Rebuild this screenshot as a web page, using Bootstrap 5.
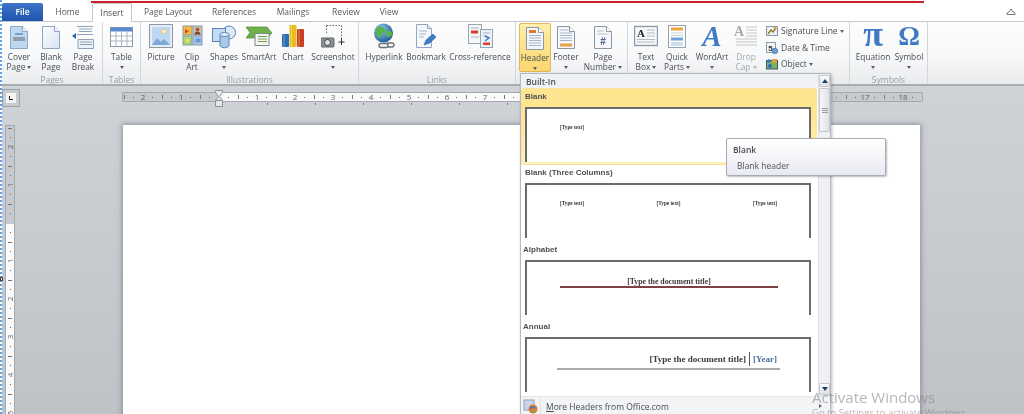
<!DOCTYPE html>
<html lang="en">
<head>
<meta charset="utf-8">
<title>Word Insert ribbon</title>
<link href="https://cdn.jsdelivr.net/npm/bootstrap@5.3.0/dist/css/bootstrap.min.css" rel="stylesheet">
<style>
html,body{margin:0;height:100%;overflow:hidden;background:#fff}
body{font-family:"Open Sans","Noto Sans",sans-serif;font-size:8.5px;color:#4a4d52;line-height:10px}
.app{width:1024px;height:414px;position:relative;overflow:hidden;filter:blur(.35px)}
.dotline{position:absolute;left:0;top:0;bottom:0;width:2px;z-index:5;background:repeating-linear-gradient(#5ba3e6 0 2px,#fff 2px 4px)}
.tabbar{height:22px;position:relative;background:#fff;border-bottom:1px solid #c4c7cc;padding-left:2px}
.redline{position:absolute;left:91px;width:833px;top:1px;height:2px;background:#c8232c}
.wfile{width:41px;height:18px;margin-top:3px;background:linear-gradient(#3d74c6,#1d55ae);color:#fff;border-radius:2px 2px 0 0;text-align:center;line-height:18px;font-weight:600}
.wtab{height:18px;margin-top:3px;line-height:18px;text-align:center;color:#55585d}
.wtab.on{height:19px;background:#fff;border:1px solid #c4c7cc;border-bottom:0;border-radius:2px 2px 0 0;color:#4a4d52;line-height:17px;position:relative;top:0}
.t1{width:49px}.t2{width:40px}.t3{width:72px}.t4{width:60px}.t5{width:58px}.t6{width:48px}.t7{width:38px}
.collapse-ico{position:absolute;right:8px;top:8px}
.ribbon{height:64px;padding-left:2px;background:linear-gradient(#fdfdfd,#f7f8f9 55%,#e9ebed);border-bottom:2px solid #a9adb2}
.rgrp{height:62px;border-right:1px solid #d4d7da;position:relative}
.gl{position:absolute;left:0;right:0;bottom:-2px;height:13px;line-height:13px;text-align:center;color:#989ca3}
.g1{width:101px;padding-left:1px}.g2{width:38px}.g3{width:218px;padding-left:4px}.g4{width:157px;padding-left:4px}.g5{width:112px;padding-left:3px}.g6{width:222px;padding-left:2px}.g7{width:78px;padding-left:5px}
.rb{display:flex;flex-direction:column;align-items:center;height:49px;padding-top:1px;flex:none;text-align:center;white-space:nowrap;font-size:8.3px}
.rb svg{display:block;height:27px;flex:none;margin-bottom:2px}
.rb.hot{background:linear-gradient(#fdeea8,#fbd76f);border:1px solid #e3b75a;border-radius:2px;margin-top:1px;padding-top:0}
.rb.off{color:#a6a9ad}
.bigsym{display:block;height:27px;margin-bottom:2px;line-height:27px;color:#3f7bc4;flex:none}
.pi{font-family:"Liberation Serif",serif;font-weight:700;font-size:36px;line-height:22px}
.om{font-family:"Liberation Serif",serif;font-weight:700;font-size:27px}
.wa{font-family:"Liberation Serif",serif;font-weight:700;font-style:italic;font-size:29px}
.w28{width:28px}.w30{width:30px}.w32{width:32px}.w34{width:34px}.w36{width:36px}.w37{width:37px}.w40{width:40px}.w42{width:42px}.w44{width:44px}.w48{width:48px}.w66{width:66px}
.car{display:inline-block;width:0;height:0;border:2.5px solid transparent;border-top:3px solid #5c5f64;border-bottom:0;vertical-align:1px}
.rb.off .car{border-top-color:#b5b8bc}
.scol{width:82px;margin-left:6px;padding-top:1px}
.si{height:16.5px;display:flex;align-items:center;gap:3px;white-space:nowrap}
.si svg{width:12px;height:12px;flex:none}
.docarea{position:relative;height:328px;background:linear-gradient(#cfd2d6,#bfc2c6)}
.corner{position:absolute;left:2px;top:3px;width:18px;height:18px;border:1px solid #9da1a6;padding:3px;background:#c7cacf}
.corner i{display:block;height:10px;background:#f4f5f6;position:relative}
.corner i::after{content:"";position:absolute;left:3px;top:3px;width:4px;height:4px;border-left:1.5px solid #222;border-bottom:1.5px solid #222}
.hruler{position:absolute;left:122px;top:6px;width:801px;height:10px;border:1px solid #a5a9ae;border-radius:1px;display:flex;padding-left:1px;background:linear-gradient(to right,#c6c9ce 96px,#fafafa 96px,#fafafa 700px,#c6c9ce 700px)}
.rc{width:38px;height:8px;flex:none;text-align:center;line-height:8px;font-size:8px;color:#5f6368;background:linear-gradient(#666,#666) 9px 50%/1px 1px no-repeat,linear-gradient(#666,#666) 28px 50%/1px 1px no-repeat,linear-gradient(#777,#777) 0 50%/1px 4px no-repeat}
.indent{position:absolute;left:215px;top:4px;z-index:2}
.hticks{position:absolute;left:219px;top:17px;width:600px;height:2px;background:repeating-linear-gradient(to right,#777 0 1px,transparent 1px 48px)}
.vruler{position:absolute;left:5px;top:39px;width:10px;height:300px;border:1px solid #a5a9ae;border-bottom:0;padding-top:2px;background:linear-gradient(#c6c9ce 98px,#fafafa 98px)}
.vc{height:38px;width:8px;display:flex;align-items:center;justify-content:center;font-size:8px;color:#5f6368;background:linear-gradient(#666,#666) 50% 9px/1px 1px no-repeat,linear-gradient(#666,#666) 50% 28px/1px 1px no-repeat,linear-gradient(#777,#777) 50% 0/4px 1px no-repeat}
.vc span{transform:rotate(-90deg);line-height:8px}
.vmark{position:absolute;left:0;top:191px;width:3px;height:4px;border:1px solid #444;background:#fff;z-index:6}
.page{position:absolute;left:123px;top:39px;width:797px;height:300px;background:#fff;box-shadow:0 0 5px 1px rgba(90,94,100,.55)}
.gal{position:absolute;left:520px;top:73px;width:311px;height:345px;background:#fff;border:1px solid #b6b9be;box-shadow:1px 1px 3px rgba(90,94,100,.4);z-index:10;font-size:8.5px}
.gal-h{height:14px;background:#eff1f4;padding-left:5px;font-weight:600;line-height:16px;color:#494c52}
.gal-body{height:308px;padding-right:12px;position:relative}
.gi{padding:0 7px 0 3px;height:77px}
.gi.sel{margin:0 1px 0 0;height:77px;background:linear-gradient(#fde48f,#fde48f 30%,#fff3bd);border:1px solid #f8e4a0;border-radius:2px;padding:0 5px 4px 2px}
.gt{height:18px;line-height:16px;font-weight:700;font-size:8px;color:#4d4f54;font-family:"Liberation Sans",sans-serif;margin-left:-1px}
.gi.sel .gt{margin-left:1px}
.gi .gt2{padding-left:2px}
.prev{height:55px;border:2px solid #6b6b6b;border-bottom:0;background:#fff;font-family:"Liberation Serif",serif;position:relative;margin-left:1px}
.tt{font-size:5.2px;font-weight:700;color:#333;line-height:6px;white-space:nowrap}
.pb{display:flex;padding:15px 0 0 33px}
.tr{display:flex;justify-content:space-between;padding:15px 32px 0 33px}
.pt{font-size:7.8px;font-weight:700;color:#3a3a3a;line-height:9px;white-space:nowrap}
.al{margin:0 31px 0 33px;padding-top:14px;text-align:center;border-bottom:2px solid #7e4242;height:26px}
.an{margin:0 29px 0 30px;padding-top:16px;height:31px;border-bottom:2px solid #aaa;display:flex;justify-content:flex-end;padding-right:3px;align-items:flex-start;font-size:9px}
.an b{border-left:1px solid #555;margin-left:3px;padding-left:3px;color:#4f6f9f;height:14px;margin-top:-3px;padding-top:3px;font-weight:700}
.sb{position:absolute;right:0;top:-14px;width:12px;height:322px;background:#eef0f3;border-left:1px solid #dfe1e5;padding-top:1px}
.sb-b{height:12px;background:linear-gradient(#fbfcfd,#dde0e4);border:1px solid #c5c8cc;border-radius:1px;display:flex;align-items:center;justify-content:center;margin-bottom:1px}
.up{border:3.5px solid transparent;border-bottom:4px solid #1f3d66;border-top:0}
.dn{border:3.5px solid transparent;border-top:4px solid #1f3d66;border-bottom:0}
.sb-t{height:44px;background:linear-gradient(to right,#f6f7f9,#dfe2e6);border:1px solid #c5c8cc;border-radius:1px;display:flex;flex-direction:column;align-items:center;justify-content:center;gap:1px}
.sb-t i{display:block;width:6px;height:1px;background:#9a9da2}
.sb-g{height:251px}
.gal-f{height:20px;border-top:1px solid #e3e5e8;background:#f3f4f6;display:flex;align-items:center;padding-left:2px;color:#484b50;position:relative}
.gal-f svg{width:15px;height:15px;flex:none}
.gal-f .vs{width:1px;height:18px;background:#e0e2e5;margin:0 5px 0 2px}
.gal-f .ar{position:absolute;right:8px;top:7px;border:2.5px solid transparent;border-left:3px solid #666;border-right:0}
.gtip{position:absolute;left:726px;top:138px;width:160px;height:38px;background:linear-gradient(#fff,#e9eaf1);border:1px solid #a8acb2;border-radius:2px;box-shadow:1px 1px 2px rgba(60,60,70,.35);z-index:12;padding:5px 6px;color:#54575d}
.gtip b{display:block;font-weight:600;color:#4a4c52;height:17px;line-height:11px}
.gtip span{padding-left:4px}
.wm{position:absolute;left:812px;top:387px;z-index:14;font-family:"Open Sans",sans-serif;font-size:15px;line-height:20px;color:rgba(130,133,138,.6);white-space:nowrap}
.wm small{display:block;font-size:9.5px;line-height:12px;margin-top:0}
</style>
</head>
<body>
<div class="app">
<div class="dotline"></div>
<div class="tabbar d-flex">
  <div class="redline"></div>
  <div class="wfile">File</div>
  <div class="wtab t1">Home</div>
  <div class="wtab on t2">Insert</div>
  <div class="wtab t3">Page Layout</div>
  <div class="wtab t4">References</div>
  <div class="wtab t5">Mailings</div>
  <div class="wtab t6">Review</div>
  <div class="wtab t7">View</div>
  <svg class="collapse-ico" width="10" height="8" viewBox="0 0 10 8"><path d="M1 6.500V5l2-1 2-3 2 3 2 1v1.500z" fill="none" stroke="#777"/></svg>
</div>

<div class="ribbon d-flex">
  <div class="rgrp g1 d-flex">
    <div class="rb w32"><svg width="20" height="27" viewBox="0 0 20 27"><path d="M1.500 3.500h12l5 5v17h-17z" fill="#bcd9f0" stroke="#8fa7c2"/><path d="M13.500 3.500v5h5" fill="#eef5fb" stroke="#8fa7c2"/><path d="M4 15h12M4 17h12" stroke="#7f8a96" stroke-width="1.300"/><path d="M6 11h8" stroke="#7aa0c4" stroke-width="2"/></svg><span>Cover</span><span>Page <i class="car"></i></span></div>
    <div class="rb w32"><svg width="20" height="27" viewBox="0 0 20 27"><defs><linearGradient id="pg" x1="0" y1="0" x2="1" y2="1"><stop offset="0" stop-color="#fff"/><stop offset="1" stop-color="#d6e2f0"/></linearGradient></defs><path d="M1.500 3.500h12l5 5v17h-17z" fill="url(#pg)" stroke="#93a6bf"/><path d="M13.500 3.500v5h5" fill="#f5f8fc" stroke="#93a6bf"/></svg><span>Blank</span><span>Page</span></div>
    <div class="rb w32"><svg width="22" height="27" viewBox="0 0 22 27"><path d="M5 3.500h16M5 11.500h16M7 6h13M7 8.500h13" stroke="#8ea1b7" fill="none"/><path d="M0 13l4-3v6z" fill="#2f5fb0"/><path d="M6 16.500h15.500v9H6z" fill="#eaf1f8" stroke="#8ea1b7"/><path d="M8 19h12M8 21.500h12" stroke="#8ea1b7"/></svg><span>Page</span><span>Break</span></div>
  <div class="gl">Pages</div></div>

  <div class="rgrp g2 d-flex">
    <div class="rb w37"><svg width="23" height="27" viewBox="0 0 23 27"><rect x=".5" y="4.500" width="22" height="19" fill="#fff" stroke="#8d99a8"/><rect x=".5" y="4.500" width="22" height="4" fill="#5a8bd0"/><path d="M1 13h21M1 18h21M6 8.500v15M11.500 8.500v15M17 8.500v15" stroke="#a9b6c6"/></svg><span>Table</span><span><i class="car"></i></span></div>
  <div class="gl">Tables</div></div>

  <div class="rgrp g3 d-flex">
    <div class="rb w32"><svg width="24" height="27" viewBox="0 0 24 27"><rect x=".5" y="1.500" width="23" height="23" fill="#e8edf3" stroke="#8d99a8"/><rect x="3" y="4" width="18" height="18" fill="#bcd7f2"/><circle cx="15" cy="8.500" r="2.300" fill="#fff2b8" stroke="#f0b060" stroke-width=".6"/><path d="M3 22l5-7 4 4 3-3 6 6z" fill="#7fa8d6"/></svg><span>Picture</span></div>
    <div class="rb w30"><svg width="21" height="27" viewBox="0 0 21 27"><rect x="1" y="3" width="9" height="9" fill="#f6b93e" stroke="#8d99a8"/><path d="M3 6l4 2.500-4 2z" fill="#c8471f"/><rect x="11" y="3" width="9" height="9" fill="#c9c3b6" stroke="#8d99a8"/><circle cx="15.500" cy="6.500" r="2" fill="#b45a2a"/><path d="M12.500 11.500c0-4 6-4 6 0z" fill="#7d4b2c"/><rect x="1" y="13" width="9" height="9" fill="#a5d47b" stroke="#8d99a8"/><circle cx="5.500" cy="17.500" r="2" fill="#f5dc50"/><rect x="11" y="13" width="9" height="9" fill="#a9c9ee" stroke="#8d99a8"/><rect x="13.500" y="15.500" width="5" height="4" fill="#6a9ad6"/></svg><span>Clip</span><span>Art</span></div>
    <div class="rb w34"><svg width="24" height="27" viewBox="0 0 24 27"><circle cx="17" cy="9.500" r="6.500" fill="#dbeaf8" stroke="#5d84b4"/><rect x=".5" y="5.500" width="13" height="13" fill="#c3dbf3" stroke="#5d84b4"/><path d="M8 11.500v11c0 3 9 3 9 0v-11" fill="#a9c9ea" stroke="#5d84b4"/><ellipse cx="12.500" cy="11.500" rx="4.500" ry="2" fill="#e3effa" stroke="#5d84b4"/></svg><span>Shapes</span><span><i class="car"></i></span></div>
    <div class="rb w36"><svg width="30" height="27" viewBox="0 0 30 27"><path d="M2 4h21l5 6-5 5H2l4-5.500z" fill="#6fb04a" stroke="#4d8a30" stroke-width=".7"/><rect x="11" y="10.500" width="14" height="12" fill="#f2f5f0" stroke="#7d8a8a"/><path d="M14 13.500h9M14 16h9M14 18.500h9" stroke="#6fa04a"/></svg><span>SmartArt</span></div>
    <div class="rb w32"><svg width="22" height="27" viewBox="0 0 22 27"><rect x="0" y="11" width="7" height="13" rx="1" fill="#2d6db5"/><rect x="7.500" y="2" width="7" height="22" rx="1" fill="#e9bd1e"/><rect x="15" y="6" width="7" height="18" rx="1" fill="#c8401f"/><path d="M2 11v13M9.500 2v22M17 6v18" stroke="#fff" stroke-opacity=".35"/></svg><span>Chart</span></div>
    <div class="rb w48"><svg width="24" height="27" viewBox="0 0 24 27"><path d="M5.500 2.500h15v16" fill="none" stroke="#666" stroke-dasharray="1.500 1.500"/><path d="M5.500 2.500v9" fill="none" stroke="#666" stroke-dasharray="1.500 1.500"/><path d="M20.500 16v6M17.500 19h6" stroke="#333"/><rect x="0" y="15" width="13" height="9" rx="1" fill="#8b9096" stroke="#5f6468"/><circle cx="6.500" cy="19.500" r="3" fill="#dfe3e7" stroke="#444"/></svg><span>Screenshot</span><span><i class="car"></i></span></div>
  <div class="gl">Illustrations</div></div>

  <div class="rgrp g4 d-flex">
    <div class="rb w42"><svg width="22" height="27" viewBox="0 0 22 27"><defs><radialGradient id="gb" cx=".35" cy=".3" r=".8"><stop offset="0" stop-color="#8fd0ee"/><stop offset="1" stop-color="#14508c"/></radialGradient></defs><circle cx="10.500" cy="10" r="9.500" fill="url(#gb)"/><path d="M5 4c3-1 5 0 7 2s-1 4-3 5-1 4-3 4-3-4-3-6 0-4 2-5zM14 8c2-1 4 0 5 2s-2 5-4 4-3-5-1-6z" fill="#5cb24a"/><path d="M8 20.500h5a2 2 0 010 4H8a2 2 0 010-4zM14 20h5a2 2 0 010 4h-5" fill="none" stroke="#6b7278" stroke-width="1.400"/></svg><span>Hyperlink</span></div>
    <div class="rb w42"><svg width="22" height="27" viewBox="0 0 22 27"><path d="M1.500 1.500h11l4 4v19h-15z" fill="#f4f7fb" stroke="#93a6bf"/><path d="M12.500 1.500v4h4" fill="#dfe8f2" stroke="#93a6bf"/><path d="M4 8h8M4 11h7M4 14h5" stroke="#a9b4c2"/><path d="M9 22l2-5 7-6 3 3-6 6z" fill="#3b7cc8" stroke="#245a9d" stroke-width=".5"/></svg><span>Bookmark</span></div>
    <div class="rb w66"><svg width="25" height="27" viewBox="0 0 25 27"><rect x=".5" y="1.500" width="13" height="19" fill="#f4f6f8" stroke="#9aa5b2"/><path d="M3 5h8M3 14h8" stroke="#a9b4c2"/><rect x="3" y="7.500" width="7" height="3" fill="#d8402a"/><rect x="12.500" y="6.500" width="12" height="18" fill="#eaf1f8" stroke="#9aa5b2"/><path d="M15 10h7M15 13h4" stroke="#a9b4c2"/><rect x="15" y="19.500" width="7" height="2.500" fill="#d8402a"/><path d="M17 13l4 2-4 3" fill="none" stroke="#3b7cc8" stroke-width="1.500"/></svg><span>Cross-reference</span></div>
  <div class="gl">Links</div></div>

  <div class="rgrp g5 d-flex">
    <div class="rb w32 hot"><svg width="18" height="27" viewBox="0 0 18 27"><path d="M.5 3.500h12l5 5v17H.5z" fill="#f3f6fa" stroke="#8c97a6"/><path d="M12.500 3.500v5h5" fill="#fff" stroke="#8c97a6"/><rect x="3" y="6" width="7" height="3" fill="#e07a30"/><path d="M3 11.500h12M3 14h12M3 16.500h12M3 19h12M3 21.500h12" stroke="#a7b5c8" stroke-width="1.200"/></svg><span>Header</span><span><i class="car"></i></span></div>
    <div class="rb w30"><svg width="18" height="27" viewBox="0 0 18 27"><path d="M.5 3.500h12l5 5v17H.5z" fill="#f3f6fa" stroke="#8c97a6"/><path d="M12.500 3.500v5h5" fill="#fff" stroke="#8c97a6"/><path d="M3 7h8M3 10h12M3 12.500h12M3 15h12M3 17.500h12" stroke="#a7b5c8" stroke-width="1.200"/><rect x="3" y="20.500" width="12" height="3" fill="#eba04a"/></svg><span>Footer</span><span><i class="car"></i></span></div>
    <div class="rb w44"><svg width="18" height="27" viewBox="0 0 18 27"><path d="M.5 3.500h12l5 5v17H.5z" fill="#f6f8fb" stroke="#8c97a6"/><path d="M12.500 3.500v5h5" fill="#fff" stroke="#8c97a6"/><path d="M3 8h7M3 11h12" stroke="#bcc6d2"/><text x="9" y="21.500" text-anchor="middle" font-family="Liberation Sans" font-size="10" font-weight="700" fill="#44658f">#</text></svg><span>Page</span><span>Number <i class="car"></i></span></div>
  </div>

  <div class="rgrp g6 d-flex">
    <div class="rb w32"><svg width="24" height="27" viewBox="0 0 24 27"><rect x=".5" y="3.500" width="23" height="19" fill="#f7f8fa" stroke="#8f9aa6" stroke-width="1.400"/><text x="7" y="14" text-anchor="middle" font-family="Liberation Serif" font-size="11" font-weight="700" fill="#222">A</text><path d="M13 7h8M13 10h8M13 13h8M3 16.500h18M3 19h18" stroke="#b0bac6"/></svg><span>Text</span><span>Box <i class="car"></i></span></div>
    <div class="rb w30"><svg width="18" height="27" viewBox="0 0 18 27"><rect x=".5" y="2.500" width="17" height="22" fill="#fff" stroke="#96a2b0"/><rect x="3" y="4.500" width="12" height="3" fill="#f0a23c"/><path d="M3 10h12M3 12.500h12" stroke="#c6cfd9"/><rect x="3" y="14.500" width="12" height="3" fill="#6ea0d8"/><path d="M3 20h12M3 22h12" stroke="#9cbce0"/></svg><span>Quick</span><span>Parts <i class="car"></i></span></div>
    <div class="rb w40"><span class="bigsym wa">A</span><span>WordArt</span><span><i class="car"></i></span></div>
    <div class="rb w28 off"><svg width="24" height="27" viewBox="0 0 24 27"><text x="5" y="13" text-anchor="middle" font-family="Liberation Serif" font-size="14" font-weight="700" fill="#a8abae">A</text><path d="M12 4h11M12 7h11M12 10h11M12 13h11M2 16h21M2 19h21M2 22h21" stroke="#c4c7ca"/></svg><span>Drop</span><span>Cap <i class="car"></i></span></div>
    <div class="scol">
      <div class="si"><svg viewBox="0 0 12 12"><rect x=".5" y="1.500" width="11" height="9" fill="#eef1f4" stroke="#8b98a6"/><path d="M2 9l3-4 2 2 3-4" stroke="#8a7a2f" stroke-width="1.400" fill="none"/><circle cx="9" cy="3" r="1.500" fill="#d4a63a"/></svg><span>Signature Line <i class="car"></i></span></div>
      <div class="si"><svg viewBox="0 0 12 12"><rect x=".5" y=".5" width="9" height="10" fill="#f3f5f7" stroke="#8b98a6"/><text x="4.500" y="8.500" text-anchor="middle" font-family="Liberation Sans" font-size="8" font-weight="700" fill="#333">5</text><circle cx="9" cy="9" r="2.800" fill="#6ea0d8" stroke="#345f96" stroke-width=".6"/></svg><span>Date &amp; Time</span></div>
      <div class="si"><svg viewBox="0 0 12 12"><rect x=".5" y="2.500" width="11" height="8.500" fill="#7fb35a" stroke="#39577a"/><path d="M0 3l3-2 3 2-3 2z" fill="#3576c2"/><rect x="6" y="1" width="5" height="4" fill="#d4a63a"/><circle cx="4" cy="8" r="2" fill="#2d6db5"/></svg><span>Object <i class="car"></i></span></div>
    </div>
  </div>

  <div class="rgrp g7 d-flex">
    <div class="rb w36"><span class="bigsym pi">π</span><span>Equation</span><span><i class="car"></i></span></div>
    <div class="rb w36"><span class="bigsym om">Ω</span><span>Symbol</span><span><i class="car"></i></span></div>
  <div class="gl">Symbols</div></div>
</div>

<div class="docarea">
  <div class="corner"><i></i></div>
  <div class="hruler">
    <div class="rc">2</div><div class="rc">1</div><div class="rc"></div><div class="rc">1</div><div class="rc">2</div><div class="rc">3</div><div class="rc">4</div><div class="rc">5</div><div class="rc">6</div><div class="rc">7</div><div class="rc">8</div><div class="rc">9</div><div class="rc">10</div><div class="rc">11</div><div class="rc">12</div><div class="rc">13</div><div class="rc">14</div><div class="rc">15</div><div class="rc">16</div><div class="rc">17</div><div class="rc">18</div>
  </div>
  <div class="hticks"></div>
  <svg class="indent" width="8" height="17" viewBox="0 0 8 17"><path d="M.5.500h7v2L4.500 6.500l3 4v6h-7v-6l3-4-3-4z" fill="#e4e6e9" stroke="#8f9398"/><path d="M.5 10.500h7" stroke="#8f9398"/></svg>
  <div class="vruler">
    <div class="vc"><span>2</span></div><div class="vc"><span>1</span></div><div class="vc"></div><div class="vc"><span>1</span></div><div class="vc"><span>2</span></div><div class="vc"><span>3</span></div><div class="vc"><span>4</span></div><div class="vc"><span>5</span></div>
  </div>
  <div class="vmark"></div>
  <div class="page"></div>
</div>

<div class="gal">
  <div class="gal-h">Built-In</div>
  <div class="gal-body">
    <div class="gi sel"><div class="gt">Blank</div><div class="prev"><div class="pb"><span class="tt">[Type text]</span></div></div></div>
    <div class="gi"><div class="gt gt2">Blank (Three Columns)</div><div class="prev"><div class="tr"><span class="tt">[Type text]</span><span class="tt">[Type text]</span><span class="tt">[Type text]</span></div></div></div>
    <div class="gi"><div class="gt">Alphabet</div><div class="prev"><div class="al"><span class="pt">[Type the document title]</span></div></div></div>
    <div class="gi"><div class="gt">Annual</div><div class="prev"><div class="an pt"><span>[Type the document title]</span><b>[Year]</b></div></div></div>
    <div class="sb">
      <div class="sb-b"><i class="up"></i></div>
      <div class="sb-t"><i></i><i></i><i></i></div>
      <div class="sb-g"></div>
      <div class="sb-b"><i class="dn"></i></div>
    </div>
  </div>
  <div class="gal-f">
    <svg viewBox="0 0 15 15"><rect x="1" y="1" width="10" height="10" fill="#c8d6e8" stroke="#8ea0b6"/><circle cx="10" cy="10" r="4.500" fill="#e8792a"/><path d="M7 8c2-2 5-1 6 1-2 0-4 0-6 2z" fill="#3f7bc4"/><path d="M8 13c2 1 4 0 5-2" stroke="#6cb24a" stroke-width="1.500" fill="none"/></svg>
    <div class="vs"></div>
    <span><u>M</u>ore Headers from Office.com</span>
    <i class="ar"></i>
  </div>
</div>

<div class="gtip"><b>Blank</b><span>Blank header</span></div>
<div class="wm">Activate Windows<small>Go to Settings to activate Windows.</small></div>
</div>
<script src="https://cdn.jsdelivr.net/npm/bootstrap@5.3.0/dist/js/bootstrap.bundle.min.js"></script>
</body>
</html>
